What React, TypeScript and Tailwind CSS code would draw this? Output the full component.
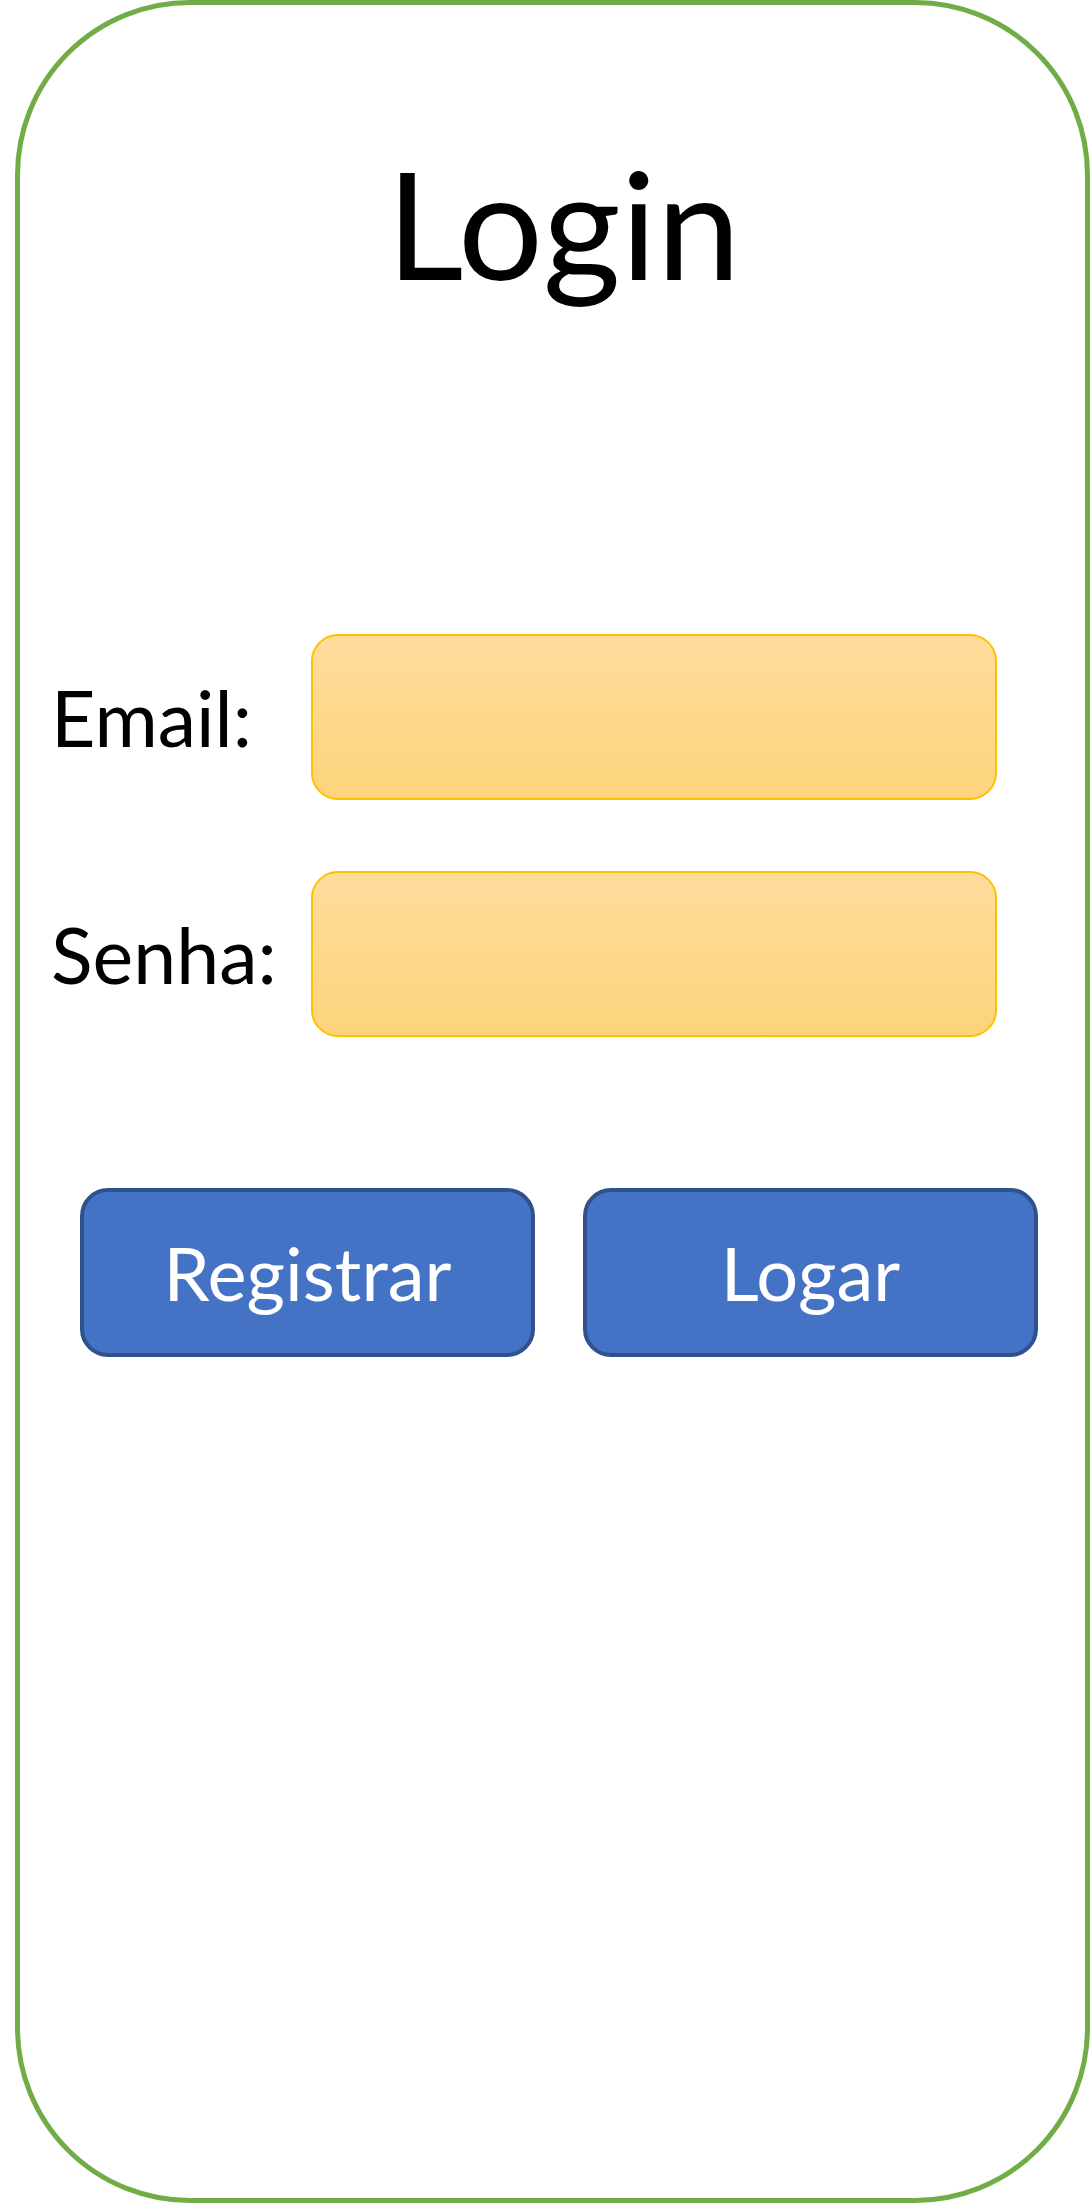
import React from "react";

export default function App() {
  return (
    <div className="w-[1090px] h-[2203px] bg-white" style={{ fontFamily: "Lato, 'Open Sans', sans-serif" }}>
      <div className="ml-[15px] w-[1075px] h-[2203px] border-[5px] border-[#70AD47] rounded-[175px] flex flex-col">
        <h1 className="mt-[142px] pl-[22px] text-center text-[150px] leading-none text-black font-normal">Login</h1>

        <div className="mt-[337px] flex flex-col gap-[71px] pl-[31px]">
          <div className="flex items-center">
            <span className="w-[260px] text-[77px] leading-none text-black">Email:</span>
            <div className="w-[686px] h-[166px] rounded-[27px] border-2 border-[#FFC000] bg-gradient-to-b from-[#FEDC9C] to-[#FDD47B]" />
          </div>
          <div className="flex items-center">
            <span className="w-[260px] text-[77px] leading-none text-black">Senha:</span>
            <div className="w-[686px] h-[166px] rounded-[27px] border-2 border-[#FFC000] bg-gradient-to-b from-[#FEDC9C] to-[#FDD47B]" />
          </div>
        </div>

        <div className="mt-[151px] flex pl-[60px] gap-[48px]">
          <button className="w-[455px] h-[169px] rounded-[28px] border-4 border-[#2F528F] bg-[#4472C4] text-white text-[74px] leading-none flex items-center justify-center">
            Registrar
          </button>
          <button className="w-[455px] h-[169px] rounded-[28px] border-4 border-[#2F528F] bg-[#4472C4] text-white text-[74px] leading-none flex items-center justify-center">
            Logar
          </button>
        </div>
      </div>
    </div>
  );
}
